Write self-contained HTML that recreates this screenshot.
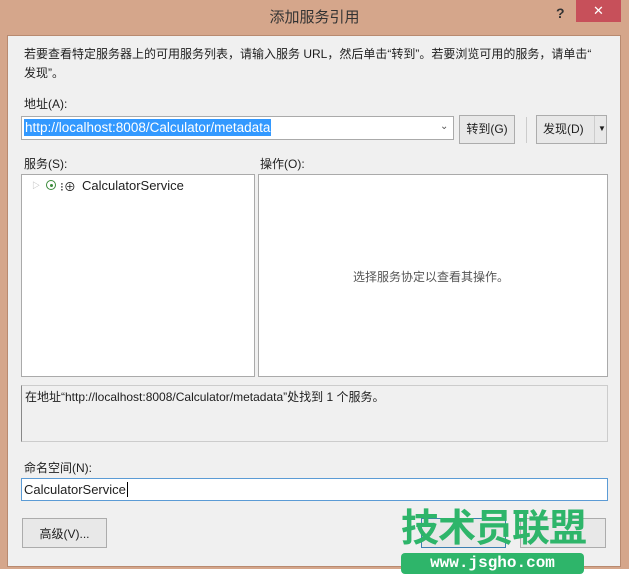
<!DOCTYPE html><html><head><meta charset="utf-8"><style>
body{margin:0;width:629px;height:576px;background:#fff;position:relative;overflow:hidden;font-family:"Liberation Sans","Noto Sans CJK SC",sans-serif;font-size:12px;color:#1e1e1e}
.a{position:absolute}
.frame{left:0;top:0;width:629px;height:569px;background:#d5a68b}
.client{left:7px;top:35px;width:614px;height:532px;background:#f0f0f0;border:1px solid #b88a70;box-sizing:border-box}
.box{background:#fff;border:1px solid #aaa;box-sizing:border-box}
.btn{background:#e8e8e8;border:1px solid #acacac;box-sizing:border-box;text-align:center;line-height:26px}
</style></head><body>
<div class="a frame"></div>
<div class="a" style="left:0;top:6px;width:629px;text-align:center;font-size:15px;color:#333">添加服务引用</div>
<div class="a" style="left:556px;top:5px;font-size:14px;font-weight:bold;color:#333">?</div>
<div class="a" style="left:576px;top:0;width:45px;height:22px;background:#c7505a;color:#fff;text-align:center;line-height:22px;font-size:13px">✕</div>
<div class="a client"></div>
<div class="a" style="left:24px;top:45px;width:572px;line-height:19px">若要查看特定服务器上的可用服务列表，请输入服务 URL，然后单击“转到”。若要浏览可用的服务，请单击“<br>发现”。</div>
<div class="a" style="left:24px;top:95px">地址(A):</div>
<div class="a box" style="left:21px;top:116px;width:433px;height:24px;border-color:#aaa"></div>
<div class="a" style="left:24px;top:119px;background:#3399ff;color:#fff;padding:0 1px;line-height:17px;font-size:13.5px">http://localhost:8008/Calculator/metadata</div>
<div class="a" style="left:440px;top:121px;font-size:10px;color:#555">⌄</div>
<div class="a btn" style="left:459px;top:115px;width:56px;height:29px">转到(G)</div>
<div class="a" style="left:526px;top:117px;width:1px;height:26px;background:#ccc"></div>
<div class="a btn" style="left:536px;top:115px;width:71px;height:29px;text-align:left;padding-left:6px">发现(D)<span style="position:absolute;left:57px;top:0;width:1px;height:27px;background:#ccc"></span><span style="position:absolute;left:61px;top:0;font-size:8px">▼</span></div>
<div class="a" style="left:24px;top:155px">服务(S):</div>
<div class="a" style="left:260px;top:155px">操作(O):</div>
<div class="a box" style="left:21px;top:174px;width:234px;height:203px"></div>
<div class="a" style="left:32px;top:180px;font-size:8px;color:#aaa">▷</div>
<div class="a" style="left:46px;top:180px;width:10px;height:10px;border:1px solid #3a8a3a;border-radius:50%;box-sizing:border-box"><div style="margin:2.5px;width:3px;height:3px;background:#3a8a3a;border-radius:50%"></div></div>
<div class="a" style="left:60px;top:178px;font-size:12px">⁝⊕</div>
<div class="a" style="left:82px;top:178px;font-size:13px">CalculatorService</div>
<div class="a box" style="left:258px;top:174px;width:350px;height:203px"></div>
<div class="a" style="left:353px;top:268px;color:#555">选择服务协定以查看其操作。</div>
<div class="a" style="left:21px;top:385px;width:587px;height:57px;border:1px solid #ccc;border-left-color:#888;box-sizing:border-box;background:#f0f0f0"></div>
<div class="a" style="left:25px;top:388px">在地址“http://localhost:8008/Calculator/metadata”处找到 1 个服务。</div>
<div class="a" style="left:24px;top:459px">命名空间(N):</div>
<div class="a box" style="left:21px;top:478px;width:587px;height:23px;border-color:#5b9bd5"></div>
<div class="a" style="left:24px;top:482px;font-size:13px">CalculatorService<span style="border-left:1px solid #000;margin-left:1px"></span></div>
<div class="a btn" style="left:22px;top:518px;width:85px;height:30px;line-height:30px">高级(V)...</div>
<div class="a btn" style="left:421px;top:518px;width:85px;height:30px;border-color:#3c7fb1"></div>
<div class="a btn" style="left:520px;top:518px;width:86px;height:30px"></div>
<div class="a" style="left:401px;top:507px;font-size:38px;font-weight:bold;color:#2eb56a;letter-spacing:-1px;line-height:44px">技术员联盟</div>
<div class="a" style="left:401px;top:553px;width:183px;height:21px;background:#2eb56a;border-radius:4px;color:#fff;text-align:center;font-family:'Liberation Mono',monospace;font-size:16px;font-weight:bold;line-height:21px">www.jsgho.com</div>
</body></html>
